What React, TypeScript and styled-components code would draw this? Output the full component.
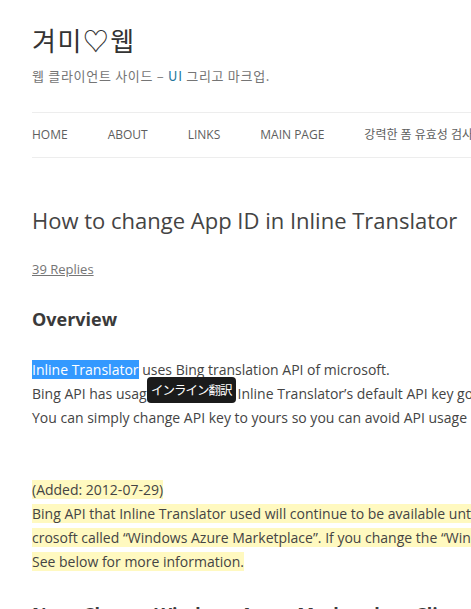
import React from 'react';
import styled, { createGlobalStyle } from 'styled-components';

const GlobalStyle = createGlobalStyle`
  html, body {
    margin: 0;
    padding: 0;
    background: #fff;
    overflow: hidden;
  }
  body {
    font-family: 'Open Sans', 'Noto Sans CJK KR', sans-serif;
    color: #444;
  }
`;

const Page = styled.div`
  width: 940px;
  padding: 0 0 0 32px;
`;

const Header = styled.header`
  padding-top: 24px;
`;

const SiteTitle = styled.h1`
  margin: 0;
  font-family: 'Noto Sans CJK KR', sans-serif;
  font-size: 26px;
  font-weight: 400;
  line-height: 32px;
  letter-spacing: 1.5px;
  color: #333;
`;

const Tagline = styled.p`
  margin: 8px 0 0;
  font-family: 'Noto Sans CJK KR', sans-serif;
  font-size: 13px;
  line-height: 24px;
  letter-spacing: 0.7px;
  color: #757575;
`;

const Link = styled.a`
  color: #21759b;
  text-decoration: none;
`;

const Nav = styled.nav`
  margin-top: 24px;
  border-top: 1px solid #ededed;
  border-bottom: 1px solid #ededed;
  display: flex;
  align-items: center;
  height: 44px;
`;

const NavItem = styled.a`
  margin-right: 40px;
  font-size: 12px;
  line-height: 24px;
  text-transform: uppercase;
  color: #5e5e5e;
  text-decoration: none;
  white-space: nowrap;
`;

const Article = styled.article`
  padding-top: 48px;
`;

const EntryTitle = styled.h1`
  margin: 0;
  font-size: 22px;
  font-weight: 400;
  line-height: 29px;
  color: #444;
`;

const Meta = styled.a`
  display: block;
  margin-top: 22px;
  font-size: 13px;
  line-height: 24px;
  color: #757575;
  text-decoration: underline;
`;

const SectionHeading = styled.h2<{ $top: number }>`
  margin: ${p => p.$top}px 0 0;
  font-size: 18px;
  font-weight: 700;
  line-height: 24px;
  color: #3a3a3a;
  white-space: nowrap;
`;

const Para = styled.p<{ $top: number }>`
  position: relative;
  margin: ${p => p.$top}px 0 0;
  font-size: 14px;
  line-height: 24px;
  color: #444;
  white-space: nowrap;
`;

const Selected = styled.span`
  background: #3399ff;
  color: #fff;
`;

const Highlight = styled.span`
  background: #fff9c0;
`;

const Tooltip = styled.div`
  position: absolute;
  left: 115px;
  top: 19px;
  padding: 0 4px;
  height: 26px;
  border-radius: 4px;
  background: #1b1b1b;
  color: #fff;
  font-family: 'Noto Sans CJK JP', sans-serif;
  font-size: 12.5px;
  line-height: 26px;
  letter-spacing: -1px;
`;

export default function App() {
  return (
    <>
      <GlobalStyle />
      <Page>
        <Header>
          <SiteTitle>겨미♡웹</SiteTitle>
          <Tagline>
            웹 클라이언트 사이드 – <Link href="#">UI</Link> 그리고 마크업.
          </Tagline>
          <Nav>
            <NavItem href="#">Home</NavItem>
            <NavItem href="#">About</NavItem>
            <NavItem href="#">Links</NavItem>
            <NavItem href="#">Main Page</NavItem>
            <NavItem href="#">강력한 폼 유효성 검사</NavItem>
          </Nav>
        </Header>
        <Article>
          <EntryTitle>How to change App ID in Inline Translator</EntryTitle>
          <Meta href="#">39 Replies</Meta>
          <SectionHeading $top={26}>Overview</SectionHeading>
          <Para $top={27}>
            <Selected>Inline Translator</Selected> uses Bing translation API of microsoft.
            <br />
            Bing API has usage limit and so Inline Translator’s default API key goes over the limit.
            <br />
            You can simply change API key to yours so you can avoid API usage limit.
            <Tooltip>インライン翻訳</Tooltip>
          </Para>
          <Para $top={48}>
            <Highlight>(Added: 2012-07-29)</Highlight>
            <br />
            <Highlight>Bing API that Inline Translator used will continue to be available until the service moves to Mi</Highlight>
            <br />
            <Highlight>crosoft called “Windows Azure Marketplace”. If you change the “Windows Azure Marketplace” key,</Highlight>
            <br />
            <Highlight>See below for more information.</Highlight>
          </Para>
          <SectionHeading $top={28}>Now, Change Windows Azure Marketplace Client ID</SectionHeading>
        </Article>
      </Page>
    </>
  );
}
